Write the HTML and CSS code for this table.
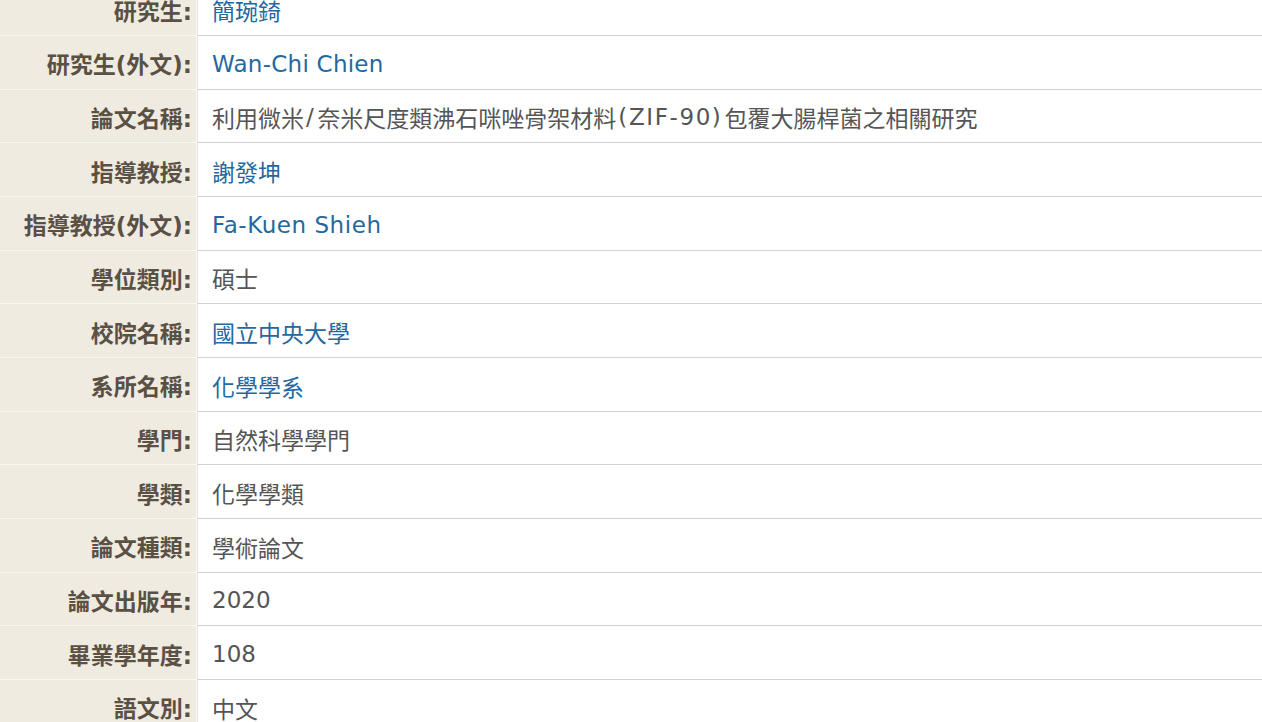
FILE: index.html
```html
<!DOCTYPE html>
<html lang="zh-Hant">
<head>
<meta charset="utf-8">
<title>論文基本資料</title>
<link rel="stylesheet" href="styles.css">
</head>
<body>
<div class="sheet">
  <div class="row"><div class="label">研究生:</div><div class="value"><a class="link">簡琬錡</a></div></div>
  <div class="row"><div class="label">研究生(外文):</div><div class="value"><a class="link latin">Wan-Chi Chien</a></div></div>
  <div class="row"><div class="label">論文名稱:</div><div class="value">利用微米<span class="inline-latin">/</span>奈米尺度類沸石咪唑骨架材料<span class="inline-latin">(ZIF-90)</span>包覆大腸桿菌之相關研究</div></div>
  <div class="row"><div class="label">指導教授:</div><div class="value"><a class="link">謝發坤</a></div></div>
  <div class="row"><div class="label">指導教授(外文):</div><div class="value"><a class="link latin-wide">Fa-Kuen Shieh</a></div></div>
  <div class="row"><div class="label">學位類別:</div><div class="value">碩士</div></div>
  <div class="row"><div class="label">校院名稱:</div><div class="value"><a class="link">國立中央大學</a></div></div>
  <div class="row"><div class="label">系所名稱:</div><div class="value"><a class="link">化學學系</a></div></div>
  <div class="row"><div class="label">學門:</div><div class="value">自然科學學門</div></div>
  <div class="row"><div class="label">學類:</div><div class="value">化學學類</div></div>
  <div class="row"><div class="label">論文種類:</div><div class="value">學術論文</div></div>
  <div class="row"><div class="label">論文出版年:</div><div class="value">2020</div></div>
  <div class="row"><div class="label">畢業學年度:</div><div class="value">108</div></div>
  <div class="row"><div class="label">語文別:</div><div class="value">中文</div></div>
  <div class="row"><div class="label">論文頁數:</div><div class="value">77</div></div>
</div>
</body>
</html>
```
FILE: styles.css
```css
html, body {
  margin: 0;
  padding: 0;
  background: #ffffff;
  overflow: hidden;
}
.sheet {
  margin-top: -17.67px;
  font-family: "DejaVu Sans", "Noto Sans CJK TC", sans-serif;
  font-size: 23px;
}
.row {
  display: grid;
  grid-template-columns: 197px 1fr;
  height: 53.67px;
}
.label {
  box-sizing: border-box;
  background: #efebe1;
  color: #5a5044;
  font-weight: bold;
  text-align: right;
  padding-right: 4px;
  padding-top: 2px;
  display: flex;
  align-items: center;
  justify-content: flex-end;
  border-bottom: 1px solid #f8f6f1;
  border-right: 1px solid #f8f6f1;
  white-space: nowrap;
}
.value {
  box-sizing: border-box;
  color: #555555;
  padding-left: 14px;
  padding-top: 3px;
  display: flex;
  align-items: center;
  border-bottom: 1px solid #d2d2d2;
  border-left: 1px solid #e4e4e4;
  white-space: nowrap;
}
.link {
  color: #2468a0;
  text-decoration: none;
}
.latin {
  letter-spacing: 0.25px;
}
.latin-wide {
  letter-spacing: 0.55px;
}
.inline-latin {
  letter-spacing: 1.6px;
  padding-left: 2px;
  padding-right: 2px;
}
```
